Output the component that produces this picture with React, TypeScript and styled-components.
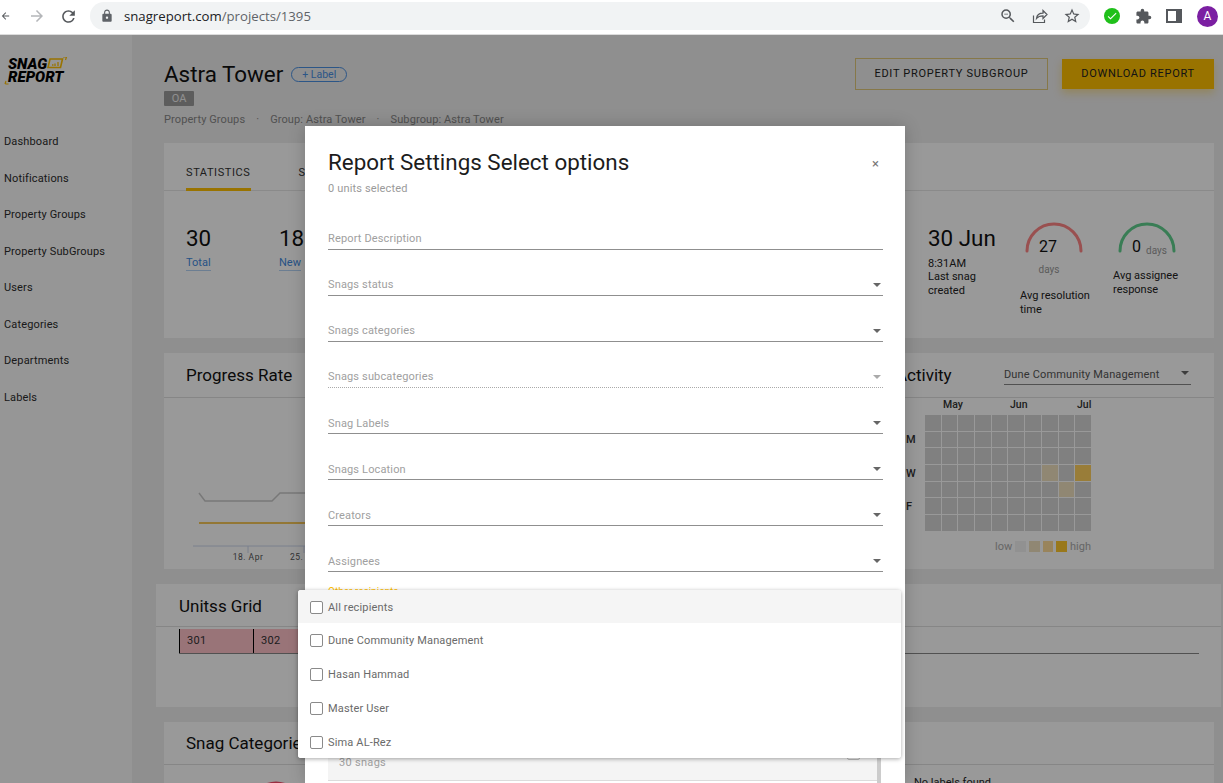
import React from "react";
import styled, { createGlobalStyle } from "styled-components";
import { MdArrowBack, MdArrowForward, MdRefresh, MdLock, MdOutlineZoomOut, MdOutlineStarBorder, MdExtension, MdCheck } from "react-icons/md";

const Global = createGlobalStyle`
  html, body { margin: 0; padding: 0; height: 100%; overflow: hidden; background: #fff; }
  * { box-sizing: border-box; }
  body { font-family: Roboto, "Liberation Sans", sans-serif; }
  #root { height: 783px; }
`;

const Page = styled.div`
  position: relative;
  width: 1223px;
  height: 783px;
  overflow: hidden;
  display: flex;
  flex-direction: column;
`;

/* browser chrome */
const Chrome = styled.header`
  height: 35px;
  flex: none;
  display: flex;
  align-items: center;
  background: #fff;
  border-bottom: 1px solid #dcdcdc;
  padding: 0 5px 2px 0;
  color: #5f6368;
`;
const NavIcon = styled.span<{ $w: number; $light?: boolean }>`
  width: ${p => p.$w}px;
  flex: none;
  display: flex;
  justify-content: flex-end;
  color: ${p => (p.$light ? "#b4b6b9" : "#55585c")};
`;
const Omnibox = styled.div`
  margin-left: 12px;
  width: 1000px;
  height: 28px;
  border-radius: 14px;
  background: #f1f3f4;
  display: flex;
  align-items: center;
  padding: 0 2px 0 10px;
  font-family: "Open Sans", Roboto, sans-serif;
  font-size: 13.2px;
  color: #202124;
`;
const Path = styled.span`
  color: #5f6368;
`;
const Url = styled.span`
  margin-left: 10px;
  flex: 1;
  white-space: nowrap;
`;
const BoxIcon = styled.span`
  width: 32px;
  display: flex;
  justify-content: center;
  color: #55585c;
`;
const Tray = styled.div`
  margin-left: 5px;
  display: flex;
  align-items: center;
  flex: 1;
  justify-content: space-between;
  padding-left: 9px;
`;
const Avatar = styled.div`
  width: 21px;
  height: 21px;
  border-radius: 50%;
  background: #7b1fa2;
  color: #fff;
  font-size: 12px;
  display: flex;
  align-items: center;
  justify-content: center;
`;
const GreenDot = styled.div`
  width: 16px;
  height: 16px;
  border-radius: 50%;
  background: #1fc01a;
  color: #fff;
  display: flex;
  align-items: center;
  justify-content: center;
`;

/* app */
const Body = styled.div`
  flex: 1;
  display: flex;
  min-height: 0;
  background: #eeeeee;
`;
const Sidebar = styled.aside`
  width: 132px;
  flex: none;
  background: #fafafa;
  padding: 19px 0 0 4px;
`;
const LogoWrap = styled.div`
  position: relative;
  width: 66px;
  height: 30px;
  margin-bottom: 40px;
`;
const LogoText = styled.div`
  font-family: Roboto, sans-serif;
  font-weight: 900;
  font-style: italic;
  font-size: 15px;
  line-height: 13px;
  color: #000;
  letter-spacing: 0;
  padding: 4px 0 0 4px;
`;
const LogoMark = styled.svg`
  position: absolute;
  left: 0;
  top: 3px;
`;
const NavItem = styled.div`
  height: 36.5px;
  font-size: 11px;
  line-height: 36.5px;
  color: #2c2c2c;
  letter-spacing: 0.15px;
`;

const Main = styled.main`
  flex: 1;
  min-width: 0;
  padding: 23px 9px 0 32px;
`;
const HeaderRow = styled.div`
  display: flex;
  justify-content: space-between;
  height: 85px;
`;
const TitleRow = styled.div`
  display: flex;
  align-items: center;
  gap: 8px;
  height: 32px;
`;
const Title = styled.h1`
  margin: 0;
  font-size: 22.4px;
  font-weight: 400;
  color: #111;
`;
const LabelPill = styled.span`
  height: 15px;
  width: 56px;
  border: 1px solid #4a90e2;
  border-radius: 8px;
  font-size: 10.5px;
  line-height: 13px;
  text-align: center;
  color: #4a90e2;
`;
const Badge = styled.span`
  display: block;
  width: 30px;
  height: 15px;
  margin-top: 1px;
  background: #9c9c9c;
  border-radius: 1px;
  color: #f0f0f0;
  font-size: 11px;
  line-height: 15px;
  text-align: center;
`;
const Crumbs = styled.div`
  margin-top: 7px;
  font-size: 11px;
  color: #888;
  display: flex;
  gap: 11px;
  letter-spacing: 0.1px;
`;
const Actions = styled.div`
  display: flex;
  gap: 14px;
  align-items: flex-start;
`;
const OutlineBtn = styled.div`
  width: 193px;
  height: 32px;
  border: 1px solid #e0c87a;
  padding-bottom: 2px;
  font-size: 11px;
  letter-spacing: 0.7px;
  color: #222;
  display: flex;
  align-items: center;
  justify-content: center;
`;
const SolidBtn = styled.div`
  width: 152px;
  height: 30px;
  margin-top: 1px;
  background: #ffc000;
  box-shadow: 0 4px 8px rgba(255, 192, 0, 0.35);
  padding-bottom: 2px;
  font-size: 11px;
  letter-spacing: 0.7px;
  color: #222;
  display: flex;
  align-items: center;
  justify-content: center;
`;

const Card = styled.section<{ $h: number; $wide?: boolean }>`
  height: ${p => p.$h}px;
  background: #fff;
  margin: 0 ${p => (p.$wide ? "-7px" : "0")} 15px ${p => (p.$wide ? "-8px" : "0")};
`;
const Tabs = styled.div`
  height: 48px;
  border-bottom: 1px solid #e6e6e6;
  padding-left: 22px;
  display: flex;
  gap: 48px;
`;
const Tab = styled.div<{ $active?: boolean }>`
  height: 48px;
  line-height: 60px;
  font-size: 11px;
  letter-spacing: 0.6px;
  color: #333;
  border-bottom: ${p => (p.$active ? "3px solid #ffc000" : "none")};
`;
const StatsRow = styled.div`
  display: flex;
  padding: 32px 0 0 22px;
`;
const Stat = styled.div<{ $push?: number; $w?: number }>`
  width: ${p => p.$w ?? 93}px;
  margin-left: ${p => p.$push ?? 0}px;
  font-size: 11px;
  line-height: 14px;
  color: #222;
`;
const Big = styled.div`
  font-size: 22.4px;
  line-height: 30px;
  color: #111;
`;
const StatLink = styled.a`
  display: inline-block;
  margin-top: 3px;
  color: #3f8ae0;
  border-bottom: 1px solid #b5d3f3;
  line-height: 14px;
`;
const Time = styled.div`
  margin-top: 4px;
  height: 13px;
  line-height: 13px;
`;
const GaugeBox = styled.div`
  position: relative;
  width: 58px;
  height: 32px;
  margin: -2px 0 0 5px;
`;
const GaugeValue = styled.span<{ $shift: number }>`
  position: absolute;
  left: 0;
  right: 0;
  top: 16px;
  padding-left: ${p => Math.max(p.$shift, 0)}px;
  padding-right: ${p => Math.max(-p.$shift, 0)}px;
  text-align: center;
  font-size: 16px;
  line-height: 20px;
  color: #111;
`;
const Days = styled.span`
  font-size: 10px;
  color: #999;
`;
const InlineDays = styled(Days)`
  position: relative;
  top: 2px;
  margin-left: 5px;
`;
const DaysLine = styled.div`
  text-align: center;
  width: 58px;
  margin: 10px 0 12px 0;
  line-height: 14px;
`;
const GaugeCaption = styled.div<{ $mt?: number }>`
  margin-top: ${p => p.$mt ?? 0}px;
`;

const CardHead = styled.div<{ $h: number; $pad?: number }>`
  height: ${p => p.$h}px;
  border-bottom: 1px solid #e0e0e0;
  display: flex;
  align-items: center;
  padding-left: ${p => p.$pad ?? 22}px;
  font-size: 17px;
  color: #111;
`;
const UnitsHead = styled(CardHead)`
  padding-top: 2px;
`;
const HeadActivity = styled.span`
  position: absolute;
  left: 732px;
`;
const ProgressCard = styled(Card)`
  position: relative;
`;
const MiniSelect = styled.div`
  position: absolute;
  left: 840px;
  top: 13px;
  width: 187px;
  height: 19px;
  border-bottom: 1px solid #888;
  font-size: 11px;
  line-height: 17px;
  color: #555;
  letter-spacing: 0.15px;
`;
const MiniCaret = styled.i`
  position: absolute;
  right: 2px;
  top: 5px;
  border: 4px solid transparent;
  border-top-color: #666;
  border-bottom: 0;
`;
const ChartSvg = styled.svg`
  display: block;
`;
const Heat = styled.div`
  position: absolute;
  left: 742px;
  top: 45px;
  width: 185px;
`;
const Months = styled.div`
  height: 17px;
  position: relative;
  font-size: 10.5px;
  font-weight: 500;
  color: #333;
`;
const MonthLabel = styled.span<{ $x: number }>`
  position: absolute;
  left: ${p => p.$x}px;
  top: 0;
`;
const HeatGrid = styled.div`
  display: grid;
  grid-template-columns: repeat(10, 1fr);
  grid-auto-rows: 15.7px;
  gap: 1px;
  width: 166px;
  margin-left: 19px;
`;
const HeatCell = styled.div<{ $c: string }>`
  background: ${p => p.$c};
`;
const DayLabel = styled.span<{ $y: number }>`
  position: absolute;
  left: 0;
  top: ${p => p.$y}px;
  font-size: 11px;
  font-weight: 500;
  color: #333;
`;
const Legend = styled.div`
  margin: 9px 0 0 89px;
  display: flex;
  align-items: center;
  gap: 3px;
  font-size: 11px;
  color: #aaa;
`;
const Swatch = styled.span<{ $c: string }>`
  width: 11px;
  height: 11px;
  background: ${p => p.$c};
`;
const UnitsBody = styled.div`
  margin: 2px 22px 0 23px;
  display: flex;
  border-bottom: 1px solid #888;
  height: 25px;
`;
const UnitCell = styled.div`
  width: 74px;
  background: #ffc1c9;
  border-left: 1.5px solid #000;
  font-size: 11px;
  line-height: 23px;
  padding-left: 7px;
  color: #333;
  letter-spacing: 0.3px;
`;
const CatBody = styled.div`
  position: relative;
  height: 30px;
`;
const NoLabels = styled.div`
  position: absolute;
  left: 750px;
  top: 11px;
  font-size: 11px;
  color: #222;
`;
const Donut = styled.svg`
  position: absolute;
  left: 96px;
  top: 15px;
`;

/* overlay + modal */
const Backdrop = styled.div`
  position: absolute;
  left: 0;
  right: 0;
  top: 35px;
  bottom: 0;
  background: rgba(0, 0, 0, 0.4);
`;
const Modal = styled.div`
  position: absolute;
  left: 305px;
  top: 126px;
  width: 600px;
  height: 657px;
  background: #fff;
  overflow: hidden;
  padding: 20px 22px 0 23px;
  box-shadow: 0 0 16px rgba(0, 0, 0, 0.2);
`;
const ModalTitle = styled.h2`
  margin: 0;
  font-size: 22.4px;
  line-height: 32px;
  font-weight: 400;
  color: #1c1c1c;
`;
const CloseX = styled.span`
  position: absolute;
  left: 567px;
  top: 29px;
  font-size: 13px;
  line-height: 18px;
  color: #777;
`;
const SubTitle = styled.div`
  margin-top: 4px;
  height: 22px;
  font-size: 11px;
  line-height: 14px;
  color: #9a9a9a;
  letter-spacing: 0.15px;
`;
const Fields = styled.div`
  margin-top: 0;
`;
const Field = styled.div<{ $dotted?: boolean; $low?: boolean }>`
  position: relative;
  height: 46px;
  border-bottom: 1px ${p => (p.$dotted ? "dotted #aaa" : "solid #8f8f8f")};
  display: flex;
  align-items: flex-end;
  padding-bottom: ${p => (p.$low ? 2 : 3)}px;
  font-size: 11px;
  line-height: 14px;
  color: #a0a0a0;
  letter-spacing: 0.15px;
`;
const Caret = styled.i<{ $dim?: boolean }>`
  position: absolute;
  right: 2px;
  bottom: 8px;
  border: 4.5px solid transparent;
  border-top-color: ${p => (p.$dim ? "#aaa" : "#666")};
  border-bottom: 0;
`;
const FloatLabel = styled.div`
  margin-top: 14px;
  height: 20px;
  font-size: 10px;
  line-height: 12px;
  color: #ffc000;
`;
const UnitList = styled.div`
  margin-top: 138px;
  width: 553px;
  height: 60px;
  border-right: 4px solid #ccc;
`;
const UnitRow = styled.div`
  position: relative;
  height: 37px;
  background: #f4f4f4;
  border-bottom: 1px solid #dcdcdc;
  padding: 12px 0 0 11px;
  font-size: 11px;
  line-height: 14px;
  color: #a0a0a0;
  letter-spacing: 0.3px;
`;
const RowBox = styled.span`
  position: absolute;
  right: 17px;
  top: 3px;
  width: 13px;
  height: 13px;
  border: 1px solid #bbb;
  border-radius: 2px;
`;
const Dropdown = styled.div`
  position: absolute;
  left: 298px;
  top: 590px;
  width: 603px;
  height: 168px;
  background: #fff;
  border-radius: 3px;
  box-shadow: 0 1px 4px rgba(0, 0, 0, 0.35);
  overflow: hidden;
`;
const Option = styled.div<{ $active?: boolean }>`
  height: ${p => (p.$active ? 33 : 34)}px;
  padding: ${p => (p.$active ? "1px" : "0")} 0 0 12px;
  display: flex;
  align-items: center;
  gap: 5px;
  background: ${p => (p.$active ? "#f5f5f5" : "#fff")};
  font-size: 11px;
  color: #6a6a6a;
  letter-spacing: 0.15px;
`;
const Check = styled.span`
  width: 13px;
  height: 13px;
  border: 1px solid #8a8a8a;
  border-radius: 2px;
  background: #fff;
`;

const nav = ["Dashboard", "Notifications", "Property Groups", "Property SubGroups", "Users", "Categories", "Departments", "Labels"];
const fields = ["Snags status", "Snags categories", "Snags subcategories", "Snag Labels", "Snags Location", "Creators", "Assignees"];
const recipients = ["All recipients", "Dune Community Management", "Hasan Hammad", "Master User", "Sima AL-Rez"];

const base = "#d6d6d6";
const heatColor = (r: number, c: number) => {
  if (r === 3 && c === 7) return "#f0e2c0";
  if (r === 3 && c === 9) return "#ffd060";
  if (r === 4 && c === 8) return "#f0e2c0";
  return base;
};

const Gauge = ({ color }: { color: string }) => (
  <svg width="58" height="32" viewBox="0 0 58 32" style={{ position: "absolute", left: 0, top: 0 }}>
    <path d="M2 30 A27 27 0 0 1 56 30" fill="none" stroke={color} strokeWidth="3" strokeLinecap="round" />
  </svg>
);

export default function App() {
  return (
    <Page>
      <Global />
      <Chrome>
        <NavIcon $w={11}><MdArrowBack size={18} /></NavIcon>
        <NavIcon $w={35} $light><MdArrowForward size={18} /></NavIcon>
        <NavIcon $w={32}><MdRefresh size={19} /></NavIcon>
        <Omnibox>
          <MdLock size={14} color="#5f6368" />
          <Url>snagreport.com<Path>/projects/1395</Path></Url>
          <BoxIcon><MdOutlineZoomOut size={18} /></BoxIcon>
          <BoxIcon>
            <svg width="16" height="16" viewBox="0 0 16 16" fill="none" stroke="#55585c" strokeWidth="1.2">
              <path d="M1.5 7.5v7h11v-3" />
              <path d="M4.5 10.5c.4-3.4 3-5.4 6.5-5.4V2.5l4 4-4 4V7.8c-2.8 0-5 .8-6.5 2.7z" />
            </svg>
          </BoxIcon>
          <BoxIcon><MdOutlineStarBorder size={18} /></BoxIcon>
        </Omnibox>
        <Tray>
          <GreenDot><MdCheck size={12} /></GreenDot>
          <MdExtension size={17} color="#55585c" />
          <svg width="16" height="14" viewBox="0 0 16 14">
            <path d="M1 1h14v12H1z" fill="none" stroke="#55585c" strokeWidth="2" />
            <path d="M10 1h5v12h-5z" fill="#55585c" />
          </svg>
          <Avatar>A</Avatar>
        </Tray>
      </Chrome>
      <Body>
        <Sidebar>
          <LogoWrap>
            <LogoText>SNAG<br />REPORT</LogoText>
            <LogoMark width="66" height="30" viewBox="0 0 66 30" fill="none">
              <path d="M46 2h12.5l-2 8.5H44z" stroke="#ffc000" strokeWidth="1.6" />
              <path d="M48 8h1.5M51 6.5v2.5M54 5v4" stroke="#ffc000" strokeWidth="1.3" />
              <path d="M59 0h3.5l-1 3" stroke="#ffc000" strokeWidth="1.2" />
              <path d="M1.5 27h3M1 27l1-3" stroke="#ffc000" strokeWidth="1.2" />
            </LogoMark>
          </LogoWrap>
          {nav.map(n => <NavItem key={n}>{n}</NavItem>)}
        </Sidebar>
        <Main>
          <HeaderRow>
            <div>
              <TitleRow>
                <Title>Astra Tower</Title>
                <LabelPill>+ Label</LabelPill>
              </TitleRow>
              <Badge>OA</Badge>
              <Crumbs>
                <span>Property Groups</span><span>·</span>
                <span>Group: Astra Tower</span><span>·</span>
                <span>Subgroup: Astra Tower</span>
              </Crumbs>
            </div>
            <Actions>
              <OutlineBtn>EDIT PROPERTY SUBGROUP</OutlineBtn>
              <SolidBtn>DOWNLOAD REPORT</SolidBtn>
            </Actions>
          </HeaderRow>

          <Card $h={195}>
            <Tabs>
              <Tab $active>STATISTICS</Tab>
              <Tab>SNAGS</Tab>
            </Tabs>
            <StatsRow>
              <Stat><Big>30</Big><StatLink>Total</StatLink></Stat>
              <Stat><Big>18</Big><StatLink>New</StatLink></Stat>
              <Stat $push={556} $w={92}>
                <Big>30 Jun</Big>
                <Time>8:31AM</Time>
                <div>Last snag</div>
                <div>created</div>
              </Stat>
              <Stat>
                <GaugeBox>
                  <Gauge color="#ff8585" />
                  <GaugeValue $shift={-12}>27</GaugeValue>
                </GaugeBox>
                <DaysLine><Days>days</Days></DaysLine>
                <GaugeCaption>Avg resolution</GaugeCaption>
                <div>time</div>
              </Stat>
              <Stat>
                <GaugeBox>
                  <Gauge color="#5fd08e" />
                  <GaugeValue $shift={5}>0<InlineDays>days</InlineDays></GaugeValue>
                </GaugeBox>
                <GaugeCaption $mt={16}>Avg assignee</GaugeCaption>
                <div>response</div>
              </Stat>
            </StatsRow>
          </Card>

          <ProgressCard $h={216}>
            <CardHead $h={45}>
              Progress Rate
              <HeadActivity>Activity</HeadActivity>
            </CardHead>
            <MiniSelect>
              Dune Community Management
              <MiniCaret />
            </MiniSelect>
            <ChartSvg width="160" height="170" viewBox="0 0 160 170" fill="none">
              <path d="M35 95l6 8h67l8-8h44" stroke="#c9c9c9" strokeWidth="1.5" />
              <path d="M35 125h125" stroke="#f5c659" strokeWidth="2" />
              <path d="M29 148h131" stroke="#ccd6eb" strokeWidth="1" />
              <path d="M84 148v7M140 148v7" stroke="#ccd6eb" strokeWidth="1" />
              <text x="84" y="162" textAnchor="middle" fontSize="8.5" letterSpacing="0.5" fill="#555" fontFamily="Roboto, sans-serif">18. Apr</text>
              <text x="126" y="162" fontSize="8.5" letterSpacing="0.5" fill="#555" fontFamily="Roboto, sans-serif">25.</text>
            </ChartSvg>
            <Heat>
              <Months>
                <MonthLabel $x={37}>May</MonthLabel>
                <MonthLabel $x={104}>Jun</MonthLabel>
                <MonthLabel $x={171}>Jul</MonthLabel>
              </Months>
              <DayLabel $y={35}>M</DayLabel>
              <DayLabel $y={69}>W</DayLabel>
              <DayLabel $y={102}>F</DayLabel>
              <HeatGrid>
                {Array.from({ length: 70 }, (_, i) => (
                  <HeatCell key={i} $c={heatColor(Math.floor(i / 10), i % 10)} />
                ))}
              </HeatGrid>
              <Legend>
                low
                <Swatch $c="#f2f2f2" />
                <Swatch $c="#f0e2c0" />
                <Swatch $c="#ffdd99" />
                <Swatch $c="#ffc92e" />
                high
              </Legend>
            </Heat>
          </ProgressCard>

          <Card $h={123} $wide>
            <UnitsHead $h={43} $pad={23}>Unitss Grid</UnitsHead>
            <UnitsBody>
              <UnitCell>301</UnitCell>
              <UnitCell>302</UnitCell>
            </UnitsBody>
          </Card>

          <Card $h={100}>
            <CardHead $h={43}>Snag Categories</CardHead>
            <CatBody>
              <Donut width="32" height="10" viewBox="0 0 32 10">
                <path d="M2 8 Q16 0 30 8" fill="none" stroke="#ff4d6d" strokeWidth="5" />
              </Donut>
              <NoLabels>No labels found</NoLabels>
            </CatBody>
          </Card>
        </Main>
      </Body>

      <Backdrop />

      <Modal>
        <ModalTitle>Report Settings Select options</ModalTitle>
        <CloseX>×</CloseX>
        <SubTitle>0 units selected</SubTitle>
        <Fields>
          <Field>Report Description</Field>
          {fields.map((f, i) => (
            <Field key={f} $dotted={f === "Snags subcategories"} $low={i >= 3}>
              {f}
              <Caret $dim={f === "Snags subcategories"} />
            </Field>
          ))}
        </Fields>
        <FloatLabel>Other recipients</FloatLabel>
        <UnitList>
          <UnitRow>
            <RowBox />
            30 snags
          </UnitRow>
        </UnitList>
      </Modal>

      <Dropdown>
        {recipients.map((r, i) => (
          <Option key={r} $active={i === 0}>
            <Check />
            {r}
          </Option>
        ))}
      </Dropdown>
    </Page>
  );
}
